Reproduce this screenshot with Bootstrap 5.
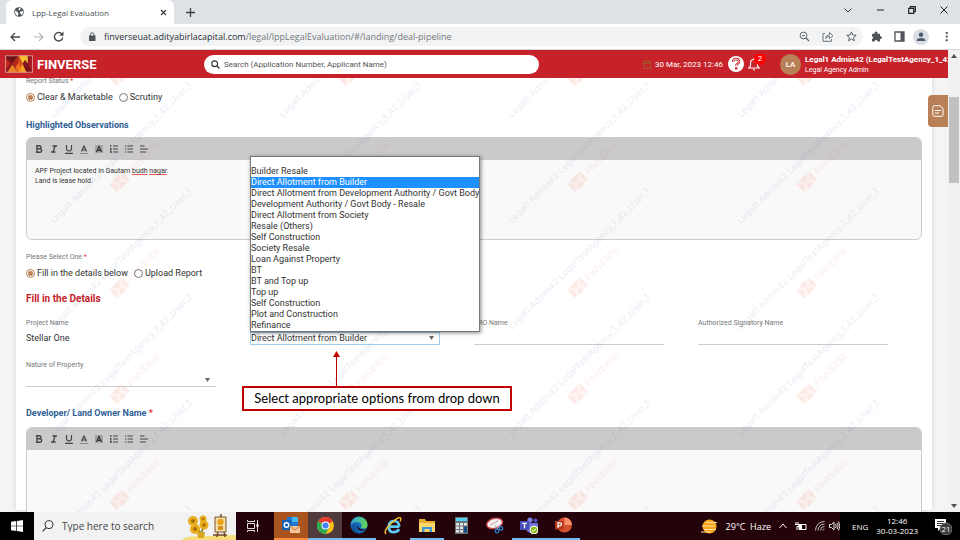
<!DOCTYPE html>
<html lang="en">
<head>
<meta charset="utf-8">
<meta name="viewport" content="width=device-width, initial-scale=1">
<title>Lpp-Legal Evaluation</title>
<link href="https://cdn.jsdelivr.net/npm/bootstrap@5.3.0/dist/css/bootstrap.min.css" rel="stylesheet">
<style>
:root{--brand-red:#c7222a;--tan:#b98058;--app-font:Roboto,"Liberation Sans",sans-serif;--ui-font:"Open Sans","Noto Sans",sans-serif}
body{font-family:var(--app-font);font-size:8px;line-height:11px;color:#333}
button,input,select{font:inherit;color:inherit}
button{background:none;border:0;padding:0}
svg{display:block;flex:none}
.shell{height:100vh;min-height:400px}
/* browser frame */
.tabstrip{background:#dee1e6;height:24px;font-family:var(--ui-font);color:#4b4f54;padding-left:6px}
.browser-tab{background:#fff;border-radius:6px 6px 0 0;width:168px;height:24px;padding:0 7px 0 8px}
.win-btn{width:32px;height:20px}
.toolbar{height:26px;font-family:var(--ui-font);border-bottom:1px solid #d5d7da;background:#fff;padding:0 8px 0 9px}
.omnibox{background:#f1f3f4;border-radius:10px;height:19px;padding:0 6px 0 8px}
.url-text{font-size:9px;color:#74777a;white-space:nowrap}
.url-text b{font-weight:400;color:#2c2f33}
/* application header */
.app-header{background:var(--brand-red);height:28px;color:#fff}
.brand{width:204px;padding-left:5px;font-size:13px;font-weight:700}
.app-search{background:#fff;height:19px;border-radius:10px;margin-right:104px;padding:0 8px 0 7px}
.app-search input{border:0;outline:0;background:none;padding:0}
.app-search input::placeholder{color:#555;opacity:1}
.header-tools{width:305px}
.date-text{width:73px}
.bell-badge{position:absolute;left:6px;top:-5px;width:12px;height:12px;border-radius:50%;background:#f00;font-size:8px;line-height:12px;text-align:center}
.avatar-dot{width:21px;height:21px;border-radius:50%;background:var(--tan);line-height:21px;text-align:center;font-weight:500}
.user-name{font-weight:700;white-space:nowrap}
.user-role{font-size:7px;line-height:10px}
/* page */
.page-area{background:#f4f4f4;padding:0 16px;font-size:9px}
.sheet{background:#fff;height:100%;padding:0 10px;box-shadow:0 0 5px #0002}
.field-label{display:block;font-size:7px;line-height:10px;color:#777}
.field-label i,.req{color:#e33;font-style:normal}
.first-label{margin-top:-2px}
.choices{height:14px;margin-top:4px;gap:6px}
.choices label{gap:2px}
.choices input{appearance:none;width:9px;height:9px;border:1px solid #777;border-radius:50%;margin:0}
.choices input:checked{border-color:var(--tan);background:radial-gradient(circle,var(--tan) 0 2px,#fff 3px)}
.sec-title{font-size:9px;line-height:12px;font-weight:700;color:#2f6096;margin:15px 0 6px}
.sec-main{font-size:10px;color:var(--brand-red);margin:13px 0}
.sec-next{margin:20px 0 8px}
.editor{border:1px solid #ccc;border-radius:6px;overflow:hidden;background:#f9f9f9;margin-bottom:12px}
.editor-tools{background:#cacaca;height:22px;padding-left:4px}
.editor-tools button{width:15px;height:15px;display:grid;place-items:center;color:#444}
.editor-text{height:79px;padding:6px 8px;font-size:7px;line-height:10px}
.misspelt{text-decoration:underline;text-decoration-color:#e55}
.field-row{row-gap:15px}
.field-col{padding-right:34px}
.field-ctl{display:block;width:100%;height:13px;margin-top:4px;padding:0;border:0;border-bottom:1px solid #ccc;outline:0;background:transparent;line-height:12px;border-radius:0}
.field-ctl.plain{border-color:transparent}
select.field-ctl{appearance:none}
select.field-ctl.active{border:1px solid #9fcdf0;line-height:11px}
.caret{position:absolute;right:6px;top:4px;width:5px;height:4px;background:#666;clip-path:polygon(0 0,100% 0,50% 100%);pointer-events:none}
.options{position:absolute;z-index:5;left:0;bottom:100%;width:230px;background:#fff;border:1px solid #777;box-shadow:1px 1px 4px #0007;margin:0;padding:0;list-style:none}
.options li{height:11px;white-space:nowrap}
.options li:first-child{height:9px}
.options .picked{background:#1e90ff;color:#fff}
.callout{position:absolute;z-index:5;left:-8px;top:19px;width:270px}
.callout svg{margin-left:91px}
.callout div{border:2px solid #c00000;background:#fff;color:#000;font:13px/21px Lato,sans-serif;font-variant-ligatures:none;height:25px;text-align:center;white-space:nowrap}
.watermark{position:absolute;inset:0;z-index:3;width:100%;height:100%;pointer-events:none;font-family:Inter,sans-serif}
.side-tab{position:absolute;z-index:4;right:0;top:17px;width:20px;height:32px;border-radius:4px 0 0 4px;background:var(--tan);color:#fff;display:grid;place-items:center}
.scroll-track{width:12px;background:#f1f1f1;padding:4px 1px}
.scroll-thumb{background:#c1c1c1;height:86px;margin-top:39px}
/* taskbar */
.taskbar{height:28px;background:#24040a;color:#fff;font-family:var(--ui-font)}
.task-btn{width:34px;height:28px;display:grid;place-items:center;border-bottom:1px solid transparent}
.task-btn.open{border-bottom:2px solid #76b9ed}
.task-search{width:202px;background:#f2f2f2;color:#444;padding-left:8px}
.task-search input{border:0;outline:0;background:none;font-size:10px;width:110px;padding:0}
.task-search input::placeholder{color:#444;opacity:1}
.weather{font-size:9px}
.tray-dark{background:#000;width:120px}
</style>
<script src="https://cdn.jsdelivr.net/npm/bootstrap@5.3.0/dist/js/bootstrap.bundle.min.js"></script>
</head>
<body>
<svg width="0" height="0" class="position-absolute" aria-hidden="true">
 <symbol id="i-u" viewBox="0 0 8 9"><path d="M1.500 0v3.500a2.500 2.500 0 0 0 5 0V0M0 8.300h8" fill="none" stroke="currentColor" stroke-width="1.200"/></symbol>
 <symbol id="i-b" viewBox="0 0 8 8"><path d="M2 .8h2.500a1.500 1.500 0 0 1 0 3H2zM2 3.800h3a1.600 1.600 0 0 1 0 3.400H2zM1 .8h1M1 7.200h1" fill="none" stroke="currentColor" stroke-width="1.400"/></symbol>
 <symbol id="i-i" viewBox="0 0 8 8"><path d="M2.500 1h4.500M1 7h4.500M5 1 3.200 7" fill="none" stroke="currentColor" stroke-width="1.300"/></symbol>
 <symbol id="i-a" viewBox="0 0 8 9"><path d="M1.500 6.500 4 1l2.500 5.500M2.400 5h3.200" fill="none" stroke="currentColor" stroke-width="1.200"/><path d="M0 8.500h8" stroke="#888"/></symbol>
 <symbol id="i-h" viewBox="0 0 8 8"><path d="M0 0h8v8H0z" fill="#a5a5a5"/><path d="M1.500 7 4 1.500 6.500 7M2.500 5.300h3" fill="none" stroke="#333" stroke-width="1.200"/></symbol>
 <symbol id="i-ol" viewBox="0 0 8 8"><path d="M3 1h5M3 4h5M3 7h5M0 .5h1V2M0 3.500h1.300L0 5h1.500M0 6.300h1.300v1.400H0" fill="none" stroke="currentColor"/></symbol>
 <symbol id="i-ul" viewBox="0 0 8 8"><path d="M2.500 1H8M2.500 4H8M2.500 7H8M0 1h1.300M0 4h1.300M0 7h1.300" fill="none" stroke="currentColor" stroke-width="1.100"/></symbol>
 <symbol id="i-al" viewBox="0 0 8 8"><path d="M0 1h4.500M0 4h8M0 7h6" fill="none" stroke="currentColor" stroke-width="1.100"/></symbol>
 <symbol id="i-logo" viewBox="0 0 27 17"><path d="M0 0h27v17H0z" fill="#8f1720"/><path d="m2 17 5-8 6 8z" fill="#e8821e"/><path d="m0 0 7 8 6-8z" fill="#6e1218"/><path d="m7 8 6-8v17z" fill="#b3261e"/><path d="m10 12 3-5 3 5-3 5z" fill="#f3701f"/><path d="m13 0 4 8 5-8z" fill="#fbc42d"/><path d="m17 8-4-8v7l3 5z" fill="#d9531f"/><path d="m17 8 4 9h-8z" fill="#f7a11f"/><path d="m27 0-5 8 5 9z" fill="#a51b21"/><path d="m22 8-3-4 3-4z" fill="#f3c637"/><path d="m22 8 3 9h-4l-4-9z" fill="#7d141b"/><path d="m0 3 5 5-5 6z" fill="#c9281f"/><path d="M.5.500h26v16H.5z" fill="none" stroke="#d98f84"/></symbol>
</svg>

<div class="shell d-flex flex-column overflow-hidden">
 <div class="tabstrip d-flex align-items-end flex-shrink-0">
  <div class="browser-tab d-flex align-items-center">
   <svg width="10" height="10" viewBox="0 0 10 10"><circle cx="5" cy="5" r="4.800" fill="#50545a"/><path d="M1 3.500 3.500 5l1 1.500-.8 2.500C2 8.500.8 6.500 1 3.500zM5 1l2 .5-1 1.500-1.500.6zM6.500 4.500 9 4v2L7.500 8.300 6 6z" fill="#fff"/></svg>
   <span class="ms-2 me-auto">Lpp-Legal Evaluation</span>
   <button aria-label="Close tab"><svg width="7" height="7" viewBox="0 0 7 7"><path d="m1 1 5 5m0-5L1 6" stroke="#3c4043" stroke-width="1.200"/></svg></button>
  </div>
  <button class="ms-2 ps-1 align-self-center" aria-label="New tab"><svg width="9" height="9" viewBox="0 0 9 9"><path d="M4.500 0v9M0 4.500h9" stroke="#3c4043" stroke-width="1.300"/></svg></button>
  <div class="ms-auto d-flex align-self-start">
   <button class="win-btn d-grid justify-content-center align-items-center" aria-label="Tab search"><svg width="8" height="5" viewBox="0 0 8 5"><path d="m.5.500 3.500 3.500L7.500.500" fill="none" stroke="#333"/></svg></button>
   <button class="win-btn d-grid justify-content-center align-items-center" aria-label="Minimise"><svg width="7" height="2"><path d="M0 1h7" stroke="#222"/></svg></button>
   <button class="win-btn d-grid justify-content-center align-items-center" aria-label="Restore"><svg width="8" height="8" viewBox="0 0 8 8"><path d="M.7 2.300h5v5h-5zM2.300 2V.7h5v5H6" fill="none" stroke="#222" stroke-width="1.200"/></svg></button>
   <button class="win-btn d-grid justify-content-center align-items-center" aria-label="Close"><svg width="8" height="8" viewBox="0 0 8 8"><path d="m.5.500 7 7m0-7-7 7" stroke="#222"/></svg></button>
  </div>
 </div>
 <div class="toolbar d-flex align-items-center flex-shrink-0">
  <button aria-label="Back"><svg width="12" height="10" viewBox="0 0 12 10"><path d="M11 5H2m4-4L2 5l4 4" fill="none" stroke="#454a4e" stroke-width="1.300"/></svg></button>
  <button class="ms-2 ps-1" aria-label="Forward"><svg width="12" height="10" viewBox="0 0 12 10"><path d="M1 5h9M6 1l4 4-4 4" fill="none" stroke="#b4b7ba" stroke-width="1.200"/></svg></button>
  <button class="ms-2 me-3" aria-label="Reload"><svg width="11" height="11" viewBox="0 0 11 11"><path d="M9 3.200a4.200 4.200 0 1 0 .8 3.300" fill="none" stroke="#454a4e" stroke-width="1.400"/><path d="M10.500.500v4.200H6.300z" fill="#454a4e"/></svg></button>
  <div class="omnibox d-flex align-items-center flex-grow-1">
   <svg width="8" height="9" viewBox="0 0 8 9"><path d="M1 3.500h6.500V9H1z" fill="#50545a"/><path d="M2.500 4V2.500a1.700 1.700 0 0 1 3.500 0V4" fill="none" stroke="#50545a"/></svg>
   <span class="url-text ms-2"><b>finverseuat.adityabirlacapital.com</b>/legal/lppLegalEvaluation/#/landing/deal-pipeline</span>
   <div class="d-flex align-items-center gap-2 ms-auto">
    <button class="me-1" aria-label="Zoom"><svg width="11" height="11" viewBox="0 0 11 11"><circle cx="4.500" cy="4.500" r="3.400" fill="none" stroke="#5f6368"/><path d="m7 7 3 3M3 4.500h3" stroke="#5f6368" stroke-width="1.200"/></svg></button>
    <button class="me-1" aria-label="Share"><svg width="12" height="11" viewBox="0 0 12 11"><path d="M3 2.500H1v7.800h8.500V8M3.500 7.500q.5-3.500 4-3.800V1.500L11 4.800 7.500 7.500V5.500q-2.500 0-4 2z" fill="none" stroke="#70757a"/></svg></button>
    <button aria-label="Bookmark"><svg width="11" height="11" viewBox="0 0 11 11"><path d="m5.500.9 1.300 3.100 3.400.3-2.600 2.200.8 3.300-2.900-1.800-2.900 1.800.8-3.300L.8 4.300l3.400-.3z" fill="none" stroke="#5f6368"/></svg></button>
   </div>
  </div>
  <div class="d-flex align-items-center ms-2">
   <button aria-label="Extensions"><svg width="11" height="11" viewBox="0 0 11 11"><path d="M1 2.700h2.500a1.600 1.600 0 1 1 3 0H9v2.600a1.400 1.400 0 1 1 0 2.700v2.500H6.500a1.400 1.400 0 0 0-2.800 0H1V8a1.400 1.400 0 0 0 0-2.700z" fill="#50545a"/></svg></button>
   <button class="ms-2 ps-1" aria-label="Side panel"><svg width="11" height="11" viewBox="0 0 11 11"><path d="M1 1h9v9H1z" fill="#fff" stroke="#50545a" stroke-width="1.300"/><path d="M6.500 1H10v9H6.500z" fill="#50545a"/></svg></button>
   <button class="ms-2" aria-label="Profile"><svg width="16" height="16" viewBox="0 0 16 16"><circle cx="8" cy="8" r="8" fill="#dadde2"/><circle cx="8" cy="5.800" r="2.200" fill="#4b5a70"/><path d="M3.800 12V11q0-2 4.200-2t4.200 2v1z" fill="#4b5a70"/></svg></button>
   <button class="ms-3 me-1" aria-label="Menu"><svg width="3" height="11" viewBox="0 0 3 11"><path d="M.7 1h2v2h-2zM.7 4.600h2v2h-2zM.7 8.200h2v2h-2z" fill="#50545a"/></svg></button>
  </div>
 </div>

 <div class="d-flex flex-grow-1 overflow-hidden">
  <div class="d-flex flex-column flex-grow-1 overflow-hidden">
   <header class="app-header d-flex align-items-center flex-shrink-0">
    <div class="brand d-flex align-items-center flex-shrink-0 gap-1"><svg width="28" height="18"><use href="#i-logo"/></svg><span>FINVERSE</span></div>
    <label class="app-search d-flex align-items-center flex-grow-1"><svg width="9" height="9" viewBox="0 0 9 9"><circle cx="3.700" cy="3.700" r="2.900" fill="none" stroke="#333" stroke-width="1.200"/><path d="m5.800 5.800 2.700 2.700" stroke="#333" stroke-width="1.300"/></svg><input class="flex-grow-1 ms-1" type="search" aria-label="Search" placeholder="Search (Application Number, Applicant Name)"></label>
    <div class="header-tools d-flex align-items-center flex-shrink-0 overflow-hidden">
     <svg class="me-1" width="8" height="9" viewBox="0 0 8 9"><path d="M.5 1.500h7v7h-7zM.5 3.500h7M2 0v2M6 0v2" fill="none" stroke="#a3582b"/></svg>
     <span class="date-text flex-shrink-0">30 Mar, 2023 12:46</span>
     <button aria-label="Help"><svg width="16" height="16" viewBox="0 0 16 16"><circle cx="8" cy="8" r="8" fill="#fff"/><path d="M5.200 6Q5 3 8 3t3 2.800q0 1.500-1.700 2.200Q8.300 8.500 8.300 10M8.200 11.300v2.200" fill="none" stroke="#c7222a" stroke-width="2.400"/><path d="M5.200 6Q5 3 8 3t3 2.800q0 1.500-1.700 2.200Q8.300 8.500 8.300 10" fill="none" stroke="#fff" stroke-width=".8"/></svg></button>
     <button class="position-relative ms-1 text-white" aria-label="Notifications"><svg width="12" height="13" viewBox="0 0 12 13"><path d="M.8 10h10.400L9.500 8V5a3.500 3.500 0 0 0-7 0v3zM5 11.800h2M6 0v1.500" fill="none" stroke="#fff" stroke-width="1.100"/></svg><span class="bell-badge">2</span></button>
     <div class="d-flex align-items-center ms-3 gap-1 ps-1 flex-shrink-0">
      <div class="avatar-dot">LA</div>
      <div><div class="user-name">Legal1 Admin42 (LegalTestAgency_1_42</div><div class="user-role">Legal Agency Admin</div></div>
     </div>
    </div>
   </header>
   <main class="page-area position-relative flex-grow-1 overflow-hidden">
    <form class="sheet d-flow-root">
     <div class="field-label first-label">Report Status <i>*</i></div>
     <div class="choices d-flex align-items-center">
      <label class="d-flex align-items-center"><input type="radio" name="status" checked>Clear &amp; Marketable</label>
      <label class="d-flex align-items-center"><input type="radio" name="status">Scrutiny</label>
     </div>
     <h2 class="sec-title">Highlighted Observations</h2>
     <div class="editor">
      <div class="editor-tools d-flex align-items-center">
       <button type="button" aria-label="Bold"><svg width="8" height="8"><use href="#i-b"/></svg></button><button type="button" aria-label="Italic"><svg width="8" height="8"><use href="#i-i"/></svg></button><button type="button" aria-label="Underline"><svg width="8" height="9"><use href="#i-u"/></svg></button><button type="button" aria-label="Text colour"><svg width="8" height="9"><use href="#i-a"/></svg></button><button type="button" aria-label="Highlight"><svg width="8" height="8"><use href="#i-h"/></svg></button><button type="button" aria-label="Numbered list"><svg width="8" height="8"><use href="#i-ol"/></svg></button><button type="button" aria-label="Bulleted list"><svg width="8" height="8"><use href="#i-ul"/></svg></button><button type="button" aria-label="Align"><svg width="8" height="8"><use href="#i-al"/></svg></button>
      </div>
      <div class="editor-text" contenteditable="true" spellcheck="false" role="textbox" aria-label="Highlighted Observations">APF Project located in Gautam <span class="misspelt">budh</span> <span class="misspelt">nagar</span>.<br>Land is lease hold.</div>
     </div>
     <div class="field-label">Please Select One <i>*</i></div>
     <div class="choices d-flex align-items-center">
      <label class="d-flex align-items-center"><input type="radio" name="mode" checked>Fill in the details below</label>
      <label class="d-flex align-items-center"><input type="radio" name="mode">Upload Report</label>
     </div>
     <h2 class="sec-title sec-main">Fill in the Details</h2>
     <div class="row g-0 field-row">
      <div class="col-3 field-col"><label class="field-label" for="project">Project Name</label><input class="field-ctl plain" id="project" value="Stellar One"></div>
      <div class="col-3 field-col">
       <label class="field-label" for="txn" aria-label="Transaction Type">&nbsp;</label>
       <div class="position-relative">
        <select class="field-ctl active" id="txn"><option>Builder Resale</option><option selected>Direct Allotment from Builder</option><option>Refinance</option></select><span class="caret"></span>
        <ul class="options" role="listbox" aria-label="Transaction Type">
         <li role="option" aria-label="None"></li><li role="option">Builder Resale</li><li role="option" class="picked" aria-selected="true">Direct Allotment from Builder</li><li role="option">Direct Allotment from Development Authority / Govt Body</li><li role="option">Development Authority / Govt Body - Resale</li><li role="option">Direct Allotment from Society</li><li role="option">Resale (Others)</li><li role="option">Self Construction</li><li role="option">Society Resale</li><li role="option">Loan Against Property</li><li role="option">BT</li><li role="option">BT and Top up</li><li role="option">Top up</li><li role="option">Self Construction</li><li role="option">Plot and Construction</li><li role="option">Refinance</li>
        </ul>
        <div class="callout"><svg width="7" height="35" viewBox="0 0 7 35"><path d="M3.500 4v31" stroke="#c00000"/><path d="M3.500 0 7 6H0z" fill="#c00000"/></svg><div>Select appropriate options from drop down</div></div>
       </div>
      </div>
      <div class="col-3 field-col"><label class="field-label" for="sro">SRO Name</label><input class="field-ctl" id="sro"></div>
      <div class="col-3 field-col"><label class="field-label" for="sign">Authorized Signatory Name</label><input class="field-ctl" id="sign"></div>
      <div class="col-3 field-col"><label class="field-label" for="nature">Nature of Property</label><div class="position-relative"><select class="field-ctl" id="nature"><option></option></select><span class="caret"></span></div></div>
     </div>
     <h2 class="sec-title sec-next">Developer/ Land Owner Name <span class="req">*</span></h2>
     <div class="editor">
      <div class="editor-tools d-flex align-items-center">
       <button type="button" aria-label="Bold"><svg width="8" height="8"><use href="#i-b"/></svg></button><button type="button" aria-label="Italic"><svg width="8" height="8"><use href="#i-i"/></svg></button><button type="button" aria-label="Underline"><svg width="8" height="9"><use href="#i-u"/></svg></button><button type="button" aria-label="Text colour"><svg width="8" height="9"><use href="#i-a"/></svg></button><button type="button" aria-label="Highlight"><svg width="8" height="8"><use href="#i-h"/></svg></button><button type="button" aria-label="Numbered list"><svg width="8" height="8"><use href="#i-ol"/></svg></button><button type="button" aria-label="Bulleted list"><svg width="8" height="8"><use href="#i-ul"/></svg></button><button type="button" aria-label="Align"><svg width="8" height="8"><use href="#i-al"/></svg></button>
      </div>
      <div class="editor-text" contenteditable="true" role="textbox" aria-label="Developer or Land Owner Name"></div>
     </div>
    </form>
    <svg class="watermark" aria-hidden="true">
     <defs>
      <g id="wm-unit"><g transform="rotate(-45)"><text font-size="9" fill="#3c6ea5" opacity=".13">Legal1 Admin42 LegalTestAgency_1_42_User_1</text></g>
       <g transform="translate(55 -40) rotate(-45)"><path d="M0 0h18v12H0z" fill="#f07a4a" opacity=".08"/><path d="m0 0 5 6-5 6zM4 0l5 6 5-6zM9 6l4 6H5zM18 0l-4 6 4 6z" fill="#d33" opacity=".06"/><text x="22" y="9" font-size="9" fill="#e22" opacity=".09">FINVERSE</text></g></g>
      <pattern id="wm" x="509" y="40" width="229" height="106" patternUnits="userSpaceOnUse"><use href="#wm-unit" x="3" y="106"/><use href="#wm-unit" x="3" y="212"/></pattern>
     </defs>
     <rect width="100%" height="100%" fill="url(#wm)"/>
    </svg>
    <button class="side-tab" aria-label="Notes"><svg width="12" height="12" viewBox="0 0 12 12"><path d="M2.500.7H8L11 3.500v6q0 1.800-1.800 1.800H2.500Q.8 11.300.8 9.500v-7Q.8.700 2.500.7zM3 5.500h6M3 8h4" fill="none" stroke="#fff"/></svg></button>
   </main>
  </div>
  <div class="scroll-track d-flex flex-column align-items-stretch flex-shrink-0">
   <svg class="mx-auto" width="6" height="4"><path d="m0 4 3-4 3 4z" fill="#505050"/></svg>
   <div class="scroll-thumb"></div>
   <svg class="mx-auto mt-auto" width="6" height="4"><path d="m0 0 3 4 3-4z" fill="#505050"/></svg>
  </div>
 </div>

 <footer class="taskbar d-flex align-items-stretch flex-shrink-0">
  <button class="task-btn bg-black" aria-label="Start"><svg width="12" height="12" viewBox="0 0 12 12"><path d="M0 1.700 5.300 1v4.700H0zM6 .9 12 0v5.700H6zM0 6.300h5.300V11L0 10.300zM6 6.300h6V12l-6-.9z" fill="#fff"/></svg></button>
  <label class="task-search d-flex align-items-center flex-shrink-0"><svg class="me-2" width="12" height="12" viewBox="0 0 12 12"><circle cx="7" cy="4.700" r="4" fill="none" stroke="#333"/><path d="M4.200 7.700.7 11.300" stroke="#333" stroke-width="1.200"/></svg><input type="search" aria-label="Type here to search" placeholder="Type here to search"><svg class="ms-auto" width="54" height="28" viewBox="0 0 54 28"><path d="M0 28q3-4 12-3.500l42-1.500v5z" fill="#f6dd7a"/><path d="M11 10q6 5 8 13m4-14-4 14" stroke="#6d7b2b" stroke-width="1.500" fill="none"/><g fill="#e9ad1c"><circle cx="11" cy="9" r="5"/><circle cx="21" cy="7" r="3.500"/><circle cx="13" cy="17" r="5"/><circle cx="22" cy="13" r="4.500"/></g><g fill="#a56f12"><circle cx="11" cy="9" r="2"/><circle cx="21" cy="7" r="1.200"/><circle cx="13" cy="17" r="2"/><circle cx="22" cy="13" r="1.800"/></g><path d="M15 20h8l-1 6h-6z" fill="#d9a520"/><path d="m35 25 1-6M43 25l-1-6M39 2v3M31 23h14" stroke="#6d4525" stroke-width="1.500"/><path d="M33 5h11v15H33z" fill="#f1dfac" stroke="#7d5630"/><circle cx="38.500" cy="10" r="3.200" fill="#eaa51b"/><path d="M36 14h5v4h-5z" fill="#d78d19"/></svg></label>
  <button class="task-btn" aria-label="Task view"><svg width="12" height="12" viewBox="0 0 12 12"><path d="M.5 3.500h7v5h-7zM.5 0v1.500h7V0M.5 12v-1.500h7V12M10.500 0v12" fill="none" stroke="#ddd"/><path d="M9.500 4h2v3h-2z" fill="#fff"/></svg></button>
  <button class="task-btn open ms-1" style="background:#a9541f;border-color:#ff8c3a" aria-label="Outlook"><svg width="18" height="18" viewBox="0 0 18 18"><path d="M5 1h11v12H5z" fill="#1d79d0"/><path d="M10 1h6v5h-6z" fill="#43b8f1"/><path d="M0 4h9v10H0z" fill="#0f5fb3"/><circle cx="4.500" cy="9" r="2.300" fill="none" stroke="#fff" stroke-width="1.400"/><path d="M8 10h10v7H8z" fill="#f6c49b"/><path d="m8 10 5 4 5-4" fill="none" stroke="#c7792f"/></svg></button>
  <button class="task-btn open" style="background:#4f3a3e" aria-label="Chrome"><svg width="17" height="17" viewBox="0 0 18 18"><circle cx="9" cy="9" r="9" fill="#fbc116"/><path d="M9 9 1.200 4.500A9 9 0 0 1 16.800 4.500z" fill="#e33b2e"/><path d="M9 9 1.200 4.500A9 9 0 0 0 9 18l4-7z" fill="#2da94f"/><circle cx="9" cy="9" r="4.300" fill="#fff"/><circle cx="9" cy="9" r="3.300" fill="#4285f4"/></svg></button>
  <button class="task-btn open" aria-label="Edge"><svg width="18" height="18" viewBox="0 0 18 18"><defs><linearGradient id="edge-top" x2="1" y2=".3"><stop stop-color="#2b9fe0"/><stop offset="1" stop-color="#5ed25c"/></linearGradient></defs><circle cx="9" cy="9" r="8.500" fill="#1670c4"/><path d="M.6 8A8.500 8.500 0 0 1 17.500 9q0 3.500-3.700 3.500-2.800 0-2.800-1.500 1-1 .5-2.500Q10.500 6 7 6 3 6 .6 8z" fill="url(#edge-top)"/><path d="M7 8q-2.500 7 5 9-8 2-10.500-5Q1.500 7 7 8z" fill="#1358a3"/><path d="M9.300 8.200q-2.300 2 0 4 2.700 2.300 7 .6-4 3.200-7.300 1.200-3.500-2.700.3-5.800z" fill="#24040a"/></svg></button>
  <button class="task-btn" aria-label="Internet Explorer"><svg width="18" height="18" viewBox="0 0 18 18"><path d="M15.300 9.700H5.200M15 12.200q-1.500 3-5.200 3-5 0-5-5.500T9.800 4q5.300 0 5.300 5.700" fill="none" stroke="#5ecbf5" stroke-width="2.700"/><path d="M2 17q-3-3 5-10.500Q15-1 16.500 1q.9 1-.5 3.500" fill="none" stroke="#f5c52d" stroke-width="1.400"/></svg></button>
  <button class="task-btn open" aria-label="File Explorer"><svg width="16" height="15" viewBox="0 0 16 15"><path d="M0 1h6l1 2h9v11H0z" fill="#e9ad32"/><path d="M0 5h16v9H0z" fill="#fbd76b"/><path d="M3 14V9h10v5h-2.500v-3h-5v3z" fill="#3c96dc"/></svg></button>
  <button class="task-btn" aria-label="Calculator"><svg width="13" height="17" viewBox="0 0 13 17"><path d="M0 0h13v17H0z" fill="#6e7377"/><path d="M1 1h11v3H1z" fill="#54d1ee"/><path d="M1 6h3v2.500H1zM5 6h3v2.500H5zM9 6h3v2.500H9zM1 9.500h3V12H1zM5 9.500h3V12H5zM1 13h3v2.500H1zM5 13h3v2.500H5z" fill="#e3e6e8"/><path d="M9 9.500h3v6H9z" fill="#164e8a"/></svg></button>
  <button class="task-btn" aria-label="Snipping Tool"><svg width="18" height="17" viewBox="0 0 18 17"><ellipse cx="8.500" cy="6.500" rx="8" ry="5" transform="rotate(-15 8 6)" fill="#f7f2f2" stroke="#c9454b" stroke-width="1.400"/><path d="m4 8 8-4" stroke="#c99"/><path d="m9 8 3 5m2-4-3 3" stroke="#aaa"/><circle cx="11" cy="14" r="1.800" fill="none" stroke="#2483c7" stroke-width="1.300"/><circle cx="15" cy="11.500" r="1.800" fill="none" stroke="#2483c7" stroke-width="1.300"/></svg></button>
  <button class="task-btn open" aria-label="Teams"><svg width="18" height="17" viewBox="0 0 18 17"><circle cx="10" cy="3" r="2.600" fill="#7b83eb"/><circle cx="15.500" cy="3.500" r="1.900" fill="#5059c9"/><path d="M6 6h12v5q0 5-6 5-5 0-6-4z" fill="#6a72d8"/><path d="M0 4h9v9H0z" fill="#464eb8"/><path d="M2.300 6.300h4.500M4.500 6.300v5" stroke="#fff" stroke-width="1.300"/><circle cx="14" cy="13" r="4" fill="#8cbd18" stroke="#fff"/><path d="m12 13 1.500 1.500 2.500-3" fill="none" stroke="#fff"/></svg></button>
  <button class="task-btn open" aria-label="PowerPoint"><svg width="17" height="16" viewBox="0 0 17 16"><circle cx="9.500" cy="8" r="7.500" fill="#d35230"/><path d="M9.500.500A7.500 7.500 0 0 1 17 8H9.500z" fill="#ff8f6b"/><path d="M0 4h8.500v8.500H0z" fill="#b7361b"/><path d="M3 11V5.800h2q1.500 0 1.500 1.500T5 8.800H3" fill="none" stroke="#fff" stroke-width="1.200"/></svg></button>
  <div class="ms-auto d-flex align-items-center">
   <svg width="17" height="15" viewBox="0 0 17 15"><circle cx="8.500" cy="7.500" r="7" fill="#f8a51b"/><path d="M5 3.500h11M1 7h13M3 10.500h12M0 13h10" stroke="#fbe2a6" stroke-width="1.200"/></svg>
   <span class="weather ms-1 ps-1">29°C &nbsp;Haze</span>
   <svg class="ms-2 me-1" width="8" height="6" viewBox="0 0 8 6"><path d="m.5 5 3.500-4 3.500 4" fill="none" stroke="#fff"/></svg>
   <svg class="ms-1" width="12" height="9" viewBox="0 0 12 9"><path d="M4 2.500h7v5H4zM1 0v2m2-2v2M0 2.500h4v2H2V8" fill="none" stroke="#fff"/><path d="M4 3h3v4H4z" fill="#fff"/></svg>
   <svg class="ms-2" width="10" height="10" viewBox="0 0 10 10"><path d="M.5 9.500a9 9 0 0 1 9-9M3 9.500A6.500 6.500 0 0 1 9.500 3M5.500 9.500a4 4 0 0 1 4-4M8 9.500A1.500 1.500 0 0 1 9.500 8" fill="none" stroke="#bbb"/></svg>
   <svg class="ms-1" width="11" height="10" viewBox="0 0 11 10"><path d="M.5 3.500h2L5 1v8L2.500 6.500h-2zM6.500 3q1.500 2 0 4M8 1.800q2.500 3.200 0 6.400M9.500.500q3 4.500 0 9" fill="none" stroke="#ddd"/></svg>
  </div>
  <div class="tray-dark d-flex align-items-center ps-2 flex-shrink-0">
   <span class="ms-1">ENG</span>
   <div class="ms-2 text-center lh-sm"><div>12:46</div><div>30-03-2023</div></div>
   <svg class="ms-auto me-2" width="17" height="17" viewBox="0 0 17 17"><path d="M0 1h11v9H6l-3 3v-3H0z" fill="#fff"/><path d="M2 3.500h7M2 5.500h7M2 7.500h5" stroke="#333"/><circle cx="11" cy="11" r="6" fill="#3b3b3b" stroke="#777"/><text x="11" y="14" font-size="8" fill="#fff" text-anchor="middle">21</text></svg>
  </div>
 </footer>
</div>
</body>
</html>
